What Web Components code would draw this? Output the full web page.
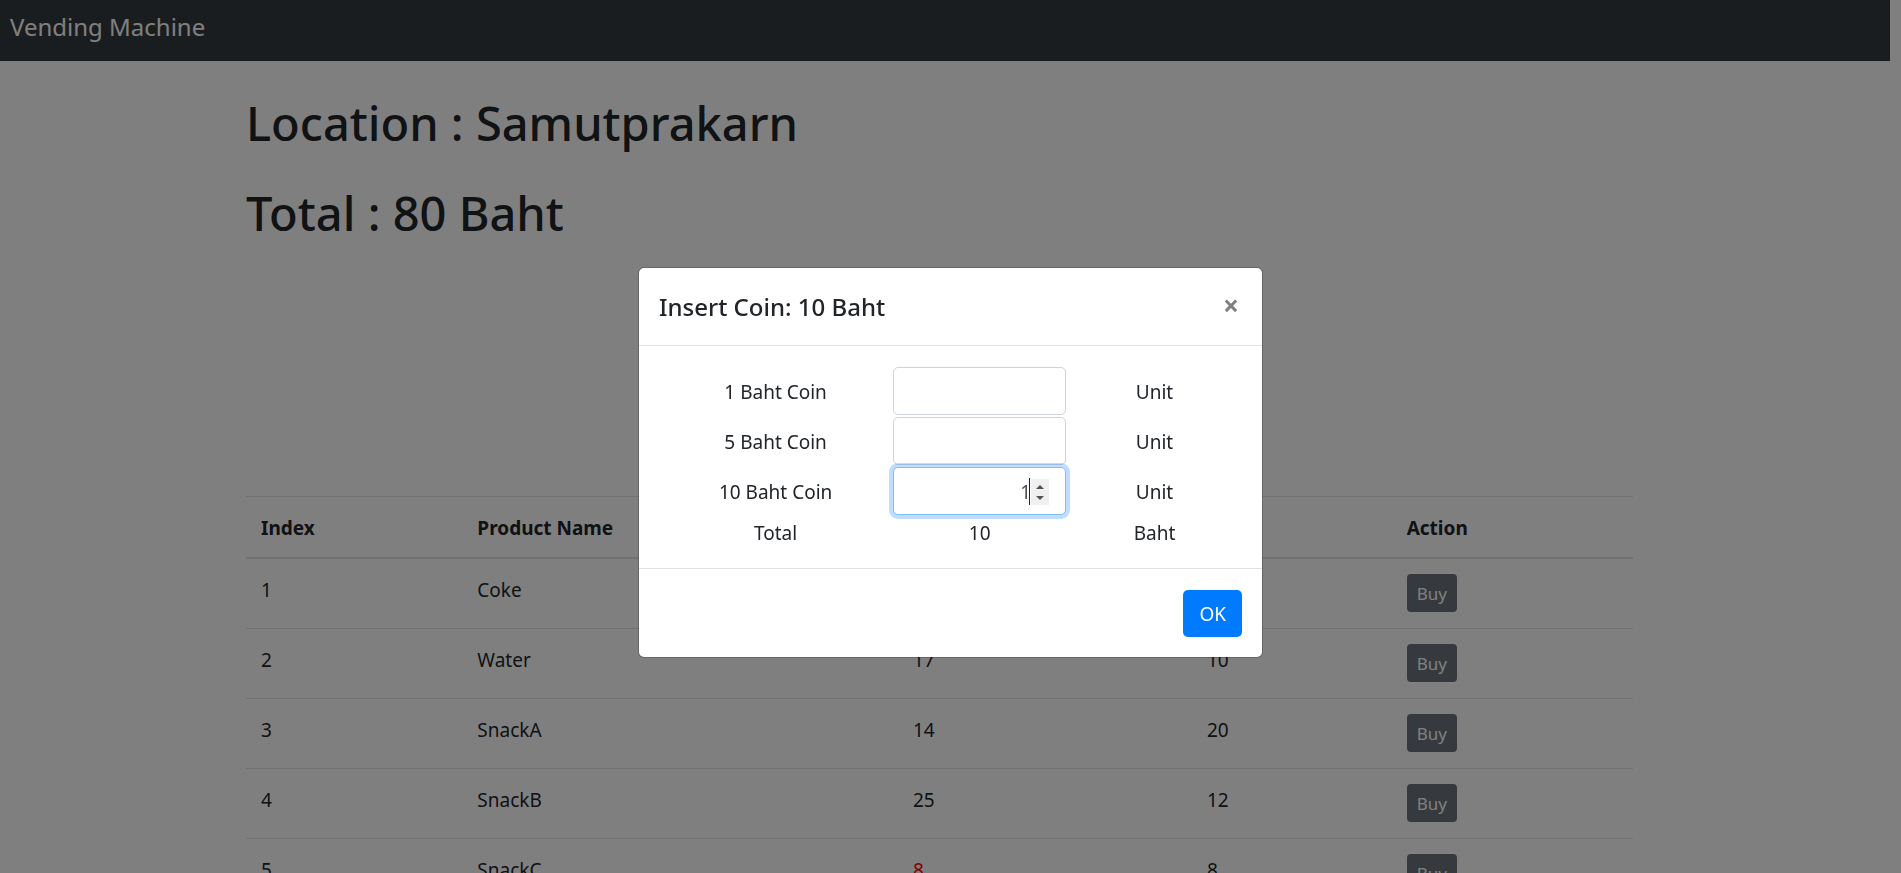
<!DOCTYPE html>
<html lang="en">
<head>
<meta charset="utf-8">
<title>Vending Machine</title>
<style>
  html, body { height: 100%; margin: 0; overflow: hidden; }
  body {
    background: #fff;
    color: #212529;
    font: 19px/30px "Noto Sans", "Open Sans", sans-serif;
  }
</style>
</head>
<body>
<vending-app></vending-app>

<script>
const define = (name, html, setup) => {
  const template = document.createElement('template');
  template.innerHTML = `<style>*, *::before, *::after { box-sizing: border-box; }</style>${html}`;
  customElements.define(name, class extends HTMLElement {
    connectedCallback() {
      if (this.shadowRoot) return;
      this.attachShadow({ mode: 'open' }).append(template.content.cloneNode(true));
      if (setup) setup(this, this.shadowRoot);
    }
  });
};

define('nav-bar', `
  <style>
    :host { display: block; background: #343a40; padding: 8px 10px 16px; margin-right: 11px; }
    a { display: inline-block; color: #fff; font-size: 24px; line-height: 37px; text-decoration: none; }
  </style>
  <a href="#"><slot></slot></a>
`);

define('machine-summary', `
  <style>
    :host { display: block; padding: 32px 0; height: 435px; }
    h1 { margin: 0 0 30px; font-size: 47px; line-height: 60px; font-weight: 500; }
  </style>
  <h1>Location : <slot name="location"></slot></h1>
  <h1>Total : <slot name="total"></slot> Baht</h1>
`);

define('product-table', `
  <style>
    :host { display: block; }
    table { width: 100%; border-collapse: separate; border-spacing: 0; table-layout: fixed; }
    th, td { padding: 16px 15px 14px; border-top: 1px solid #dee2e6; text-align: left; vertical-align: top; }
    th { border-bottom: 2px solid #dee2e6; font-weight: 700; }
    tbody tr:first-child td { border-top: 0; }
    td { height: 70px; }
    tbody tr:first-child td { height: 69px; }
    td:last-child { padding-top: 15px; }
    .low { color: #f00; }
    .index { width: 15.6%; } .name { width: 31.4%; } .stock { width: 21.2%; } .price { width: 14.4%; }
    button {
      display: block; height: 38px; padding: 1px 10px 0; border: 0; border-radius: 4px;
      background: #6c757d; color: #fff; font: inherit; font-size: 17px; line-height: 36px;
    }
  </style>
  <table>
    <thead><tr>
      <th class="index" scope="col">Index</th>
      <th class="name" scope="col">Product Name</th>
      <th class="stock" scope="col">Stock</th>
      <th class="price" scope="col">Price</th>
      <th scope="col">Action</th>
    </tr></thead>
    <tbody></tbody>
  </table>
`, (host, root) => {
  const products = [['Coke', 20, 15], ['Water', 17, 10], ['SnackA', 14, 20], ['SnackB', 25, 12], ['SnackC', 8, 8]];
  root.querySelector('tbody').innerHTML = products.map(([name, stock, price], i) => `
    <tr>
      <td>${i + 1}</td><td>${name}</td>
      <td class="${stock < 10 ? 'low' : ''}">${stock}</td><td>${price}</td>
      <td><button type="button">Buy</button></td>
    </tr>`).join('');
});

define('coin-row', `
  <style>
    :host { display: grid; grid-template-columns: 4fr 3fr 3fr; align-items: center; text-align: center; height: 50px; }
    label, span { padding-top: 2px; }
    .field { position: relative; padding: 0 1px; }
    input {
      display: block; width: 100%; height: 48px; padding: 9px 16px 7px; border: 1px solid #ced4da; border-radius: 5px;
      background: #fff; color: #495057; font: inherit; text-align: right; outline: 0; caret-color: transparent;
    }
    input::-webkit-inner-spin-button {
      appearance: none; width: 18px; height: 26px; margin: 0; opacity: 0;
      background: #f0f0f0 url("data:image/svg+xml,%3Csvg xmlns='http://www.w3.org/2000/svg' width='18' height='26'%3E%3Cpath d='M5 10 9 6 13 10zM5 17 9 21 13 17z' fill='%23505050'/%3E%3C/svg%3E") no-repeat center;
    }
    :host([active]) input { border-color: #80bdff; box-shadow: 0 0 0 4px rgba(0, 123, 255, .25); }
    :host([active]) input::-webkit-inner-spin-button { opacity: 1; }
    :host([active]) .field { z-index: 1; }
    :host([active]) .field::after {
      content: ""; position: absolute; top: 11px; right: 37px; width: 1px; height: 27px; background: #212529;
    }
  </style>
  <label for="count"><slot></slot></label>
  <div class="field"><input id="count" type="number" min="0"></div>
  <span>Unit</span>
`, (host, root) => {
  const input = root.querySelector('input');
  input.value = host.getAttribute('value') || '';
  if (host.hasAttribute('active')) input.focus();
});

define('coin-dialog', `
  <style>
    :host { position: fixed; inset: 0; display: block; padding-top: 267px; background: rgba(0, 0, 0, .5); }
    .dialog {
      width: 625px; max-width: 100%; margin: 0 auto; border: 1px solid rgba(0, 0, 0, .2); border-radius: 6px;
      background: #fff; background-clip: padding-box;
    }
    header { display: flex; justify-content: space-between; padding: 20px 20px 19px; border-bottom: 1px solid #dee2e6; }
    h5 { margin: 0; font-size: 24px; line-height: 38px; font-weight: 500; }
    .close { align-self: flex-start; padding: 0 3px; border: 0; background: none; color: #808080; font: 700 28px/34px "Noto Sans", sans-serif; }
    .body { padding: 20px; }
    .total { display: grid; grid-template-columns: 4fr 3fr 3fr; align-items: end; text-align: center; height: 32px; }
    footer { display: flex; justify-content: flex-end; padding: 21px 20px 20px; border-top: 1px solid #dee2e6; }
    .ok { height: 47px; padding: 0 16px; border: 0; border-radius: 5px; background: #007bff; color: #fff; font: inherit; }
  </style>
  <div class="dialog" role="dialog" aria-labelledby="title">
    <header>
      <h5 id="title">Insert Coin: 10 Baht</h5>
      <button class="close" type="button" aria-label="Close">×</button>
    </header>
    <div class="body">
      <coin-row>1 Baht Coin</coin-row>
      <coin-row>5 Baht Coin</coin-row>
      <coin-row active value="1">10 Baht Coin</coin-row>
      <div class="total"><span>Total</span><span>10</span><span>Baht</span></div>
    </div>
    <footer><button class="ok" type="button">OK</button></footer>
  </div>
`);

define('vending-app', `
  <style>
    :host { display: block; height: 100%; overflow: hidden; }
    main { margin-right: 22px; }
    .container { max-width: 1425px; margin: 0 auto; padding: 0 19px; }
  </style>
  <nav-bar>Vending Machine</nav-bar>
  <main><div class="container">
    <machine-summary><span slot="location">Samutprakarn</span><span slot="total">80</span></machine-summary>
    <product-table></product-table>
  </div></main>
  <coin-dialog></coin-dialog>
`);
</script>
</body>
</html>
